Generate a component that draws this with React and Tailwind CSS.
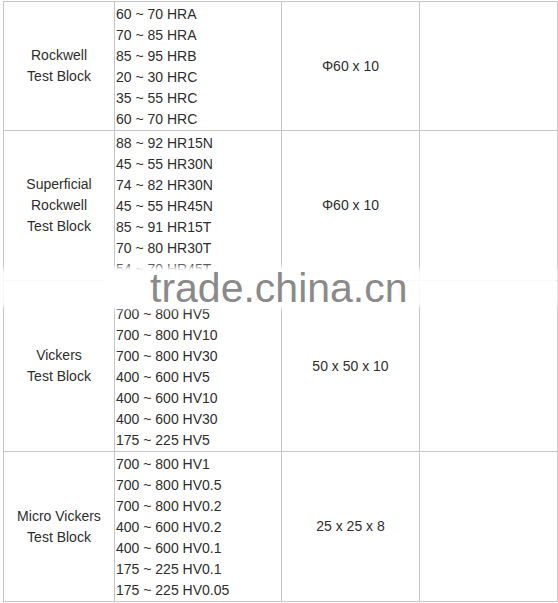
import React from "react";

const rows = [
  {
    label: ["Rockwell", "Test Block"],
    ranges: ["60 ~ 70 HRA", "70 ~ 85 HRA", "85 ~ 95 HRB", "20 ~ 30 HRC", "35 ~ 55 HRC", "60 ~ 70 HRC"],
    size: "Φ60 x 10",
    h: "h-[129px]",
  },
  {
    label: ["Superficial", "Rockwell", "Test Block"],
    ranges: ["88 ~ 92 HR15N", "45 ~ 55 HR30N", "74 ~ 82 HR30N", "45 ~ 55 HR45N", "85 ~ 91 HR15T", "70 ~ 80 HR30T", "54 ~ 70 HR45T"],
    size: "Φ60 x 10",
    h: "h-[150px]",
  },
  {
    label: ["Vickers", "Test Block"],
    ranges: ["\u00a0", "700 ~ 800 HV5", "700 ~ 800 HV10", "700 ~ 800 HV30", "400 ~ 600 HV5", "400 ~ 600 HV10", "400 ~ 600 HV30", "175 ~ 225 HV5"],
    size: "50 x 50 x 10",
    h: "h-[171px]",
  },
  {
    label: ["Micro Vickers", "Test Block"],
    ranges: ["700 ~ 800 HV1", "700 ~ 800 HV0.5", "700 ~ 800 HV0.2", "400 ~ 600 HV0.2", "400 ~ 600 HV0.1", "175 ~ 225 HV0.1", "175 ~ 225 HV0.05"],
    size: "25 x 25 x 8",
    h: "h-[150px]",
  },
];

export default function App() {
  return (
    <div className="relative w-[558px] h-[603px] bg-white overflow-hidden text-[14px] leading-[21px] text-[#2e2e2e]" style={{ fontFamily: '"Liberation Sans", Arial, sans-serif' }}>
      <div className="ml-[3px] mt-[1px] w-[555px] border-l border-t border-[#c6c6c6]">
        {rows.map((r, i) => (
          <div key={i} className={`grid grid-cols-[111px_167px_138px_138px] ${r.h}`}>
            <div className="border-r border-b border-[#c6c6c6] flex flex-col items-center justify-center text-center">
              {r.label.map((l, j) => (
                <div key={j}>{l}</div>
              ))}
            </div>
            <div className="border-r border-b border-[#c6c6c6] pl-[1px] pt-[2px]">
              {r.ranges.map((t, j) => (
                <div key={j} className="whitespace-nowrap">{t}</div>
              ))}
            </div>
            <div className="border-r border-b border-[#c6c6c6] flex items-center justify-center">
              {r.size}
            </div>
            <div className="border-r border-b border-[#c6c6c6]"></div>
          </div>
        ))}
      </div>
      <div className="absolute left-0 top-[269px] w-[558px] h-[37px] bg-white/90 blur-[2px]"></div>
      <div className="absolute left-[104px] top-[267px] w-[214px] h-[41px] bg-white blur-[3px]"></div>
      <div
        className="absolute left-[150px] top-[268px] text-[41px] leading-none text-[#8a8a8a] whitespace-nowrap"
        style={{ fontFamily: '"Liberation Sans", Arial, sans-serif' }}
      >
        trade.china.cn
      </div>
    </div>
  );
}
